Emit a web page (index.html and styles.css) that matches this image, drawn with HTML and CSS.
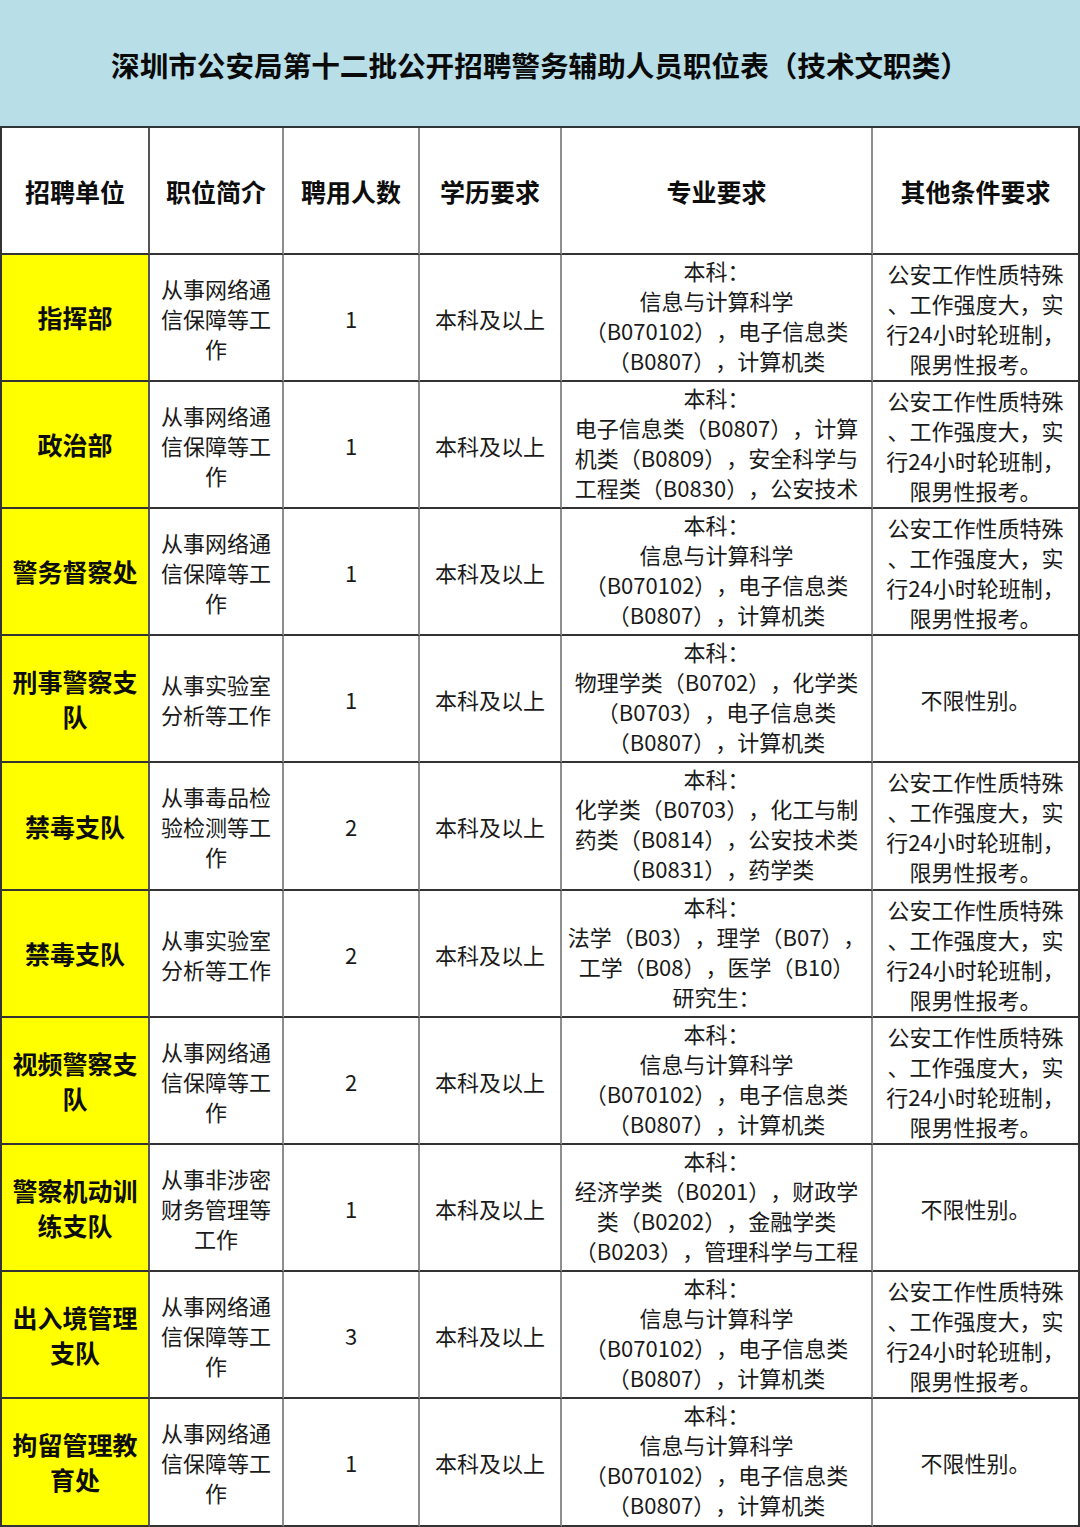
FILE: index.html
```html
<!DOCTYPE html>
<html lang="zh-CN">
<head>
<meta charset="utf-8">
<title>深圳市公安局第十二批公开招聘警务辅助人员职位表（技术文职类）</title>
<link rel="stylesheet" href="styles.css">
</head>
<body>
<div class="page">
  <header class="banner">
    <h1 class="title">深圳市公安局第十二批公开招聘警务辅助人员职位表（技术文职类）</h1>
  </header>
  <div class="grid">
    <div class="cell head first">招聘单位</div>
    <div class="cell head">职位简介</div>
    <div class="cell head">聘用人数</div>
    <div class="cell head">学历要求</div>
    <div class="cell head">专业要求</div>
    <div class="cell head last">其他条件要求</div>

    <div class="cell unit first">指挥部</div>
    <div class="cell txt narrow">从事网络通信保障等工作</div>
    <div class="cell txt">1</div>
    <div class="cell txt">本科及以上</div>
    <div class="cell major">本科：<br>信息与计算科学（B070102），电子信息类（B0807），计算机类（B0809），公安技术类（B0831）</div>
    <div class="cell txt last">公安工作性质特殊<br>、工作强度大，实<br>行24小时轮班制，<br>限男性报考。</div>

    <div class="cell unit first">政治部</div>
    <div class="cell txt narrow">从事网络通信保障等工作</div>
    <div class="cell txt">1</div>
    <div class="cell txt">本科及以上</div>
    <div class="cell major">本科：<br>电子信息类（B0807），计算机类（B0809），安全科学与工程类（B0830），公安技术类（B0831）</div>
    <div class="cell txt last">公安工作性质特殊<br>、工作强度大，实<br>行24小时轮班制，<br>限男性报考。</div>

    <div class="cell unit first">警务督察处</div>
    <div class="cell txt narrow">从事网络通信保障等工作</div>
    <div class="cell txt">1</div>
    <div class="cell txt">本科及以上</div>
    <div class="cell major">本科：<br>信息与计算科学（B070102），电子信息类（B0807），计算机类（B0809），公安技术类（B0831）</div>
    <div class="cell txt last">公安工作性质特殊<br>、工作强度大，实<br>行24小时轮班制，<br>限男性报考。</div>

    <div class="cell unit first">刑事警察支队</div>
    <div class="cell txt narrow">从事实验室分析等工作</div>
    <div class="cell txt">1</div>
    <div class="cell txt">本科及以上</div>
    <div class="cell major">本科：<br>物理学类（B0702），化学类（B0703），电子信息类（B0807），计算机类（B0809），公安技术类（B0831）</div>
    <div class="cell txt last">不限性别。</div>

    <div class="cell unit first">禁毒支队</div>
    <div class="cell txt narrow">从事毒品检验检测等工作</div>
    <div class="cell txt">2</div>
    <div class="cell txt">本科及以上</div>
    <div class="cell major">本科：<br>化学类（B0703），化工与制药类（B0814），公安技术类（B0831），药学类（B1007），中药学类（B1008）</div>
    <div class="cell txt last">公安工作性质特殊<br>、工作强度大，实<br>行24小时轮班制，<br>限男性报考。</div>

    <div class="cell unit first">禁毒支队</div>
    <div class="cell txt narrow">从事实验室分析等工作</div>
    <div class="cell txt">2</div>
    <div class="cell txt">本科及以上</div>
    <div class="cell major">本科：<br>法学（B03），理学（B07），工学（B08），医学（B10）<br>研究生：<br>法学（A03），理学（A07），工学（A08），医学（A10）</div>
    <div class="cell txt last">公安工作性质特殊<br>、工作强度大，实<br>行24小时轮班制，<br>限男性报考。</div>

    <div class="cell unit first">视频警察支队</div>
    <div class="cell txt narrow">从事网络通信保障等工作</div>
    <div class="cell txt">2</div>
    <div class="cell txt">本科及以上</div>
    <div class="cell major">本科：<br>信息与计算科学（B070102），电子信息类（B0807），计算机类（B0809），公安技术类（B0831）</div>
    <div class="cell txt last">公安工作性质特殊<br>、工作强度大，实<br>行24小时轮班制，<br>限男性报考。</div>

    <div class="cell unit first">警察机动训练支队</div>
    <div class="cell txt narrow">从事非涉密财务管理等工作</div>
    <div class="cell txt">1</div>
    <div class="cell txt">本科及以上</div>
    <div class="cell major">本科：<br>经济学类（B0201），财政学类（B0202），金融学类（B0203），管理科学与工程（B1201），工商管理类（B1202）</div>
    <div class="cell txt last">不限性别。</div>

    <div class="cell unit first">出入境管理支队</div>
    <div class="cell txt narrow">从事网络通信保障等工作</div>
    <div class="cell txt">3</div>
    <div class="cell txt">本科及以上</div>
    <div class="cell major">本科：<br>信息与计算科学（B070102），电子信息类（B0807），计算机类（B0809），公安技术类（B0831）</div>
    <div class="cell txt last">公安工作性质特殊<br>、工作强度大，实<br>行24小时轮班制，<br>限男性报考。</div>

    <div class="cell unit first">拘留管理教育处</div>
    <div class="cell txt narrow">从事网络通信保障等工作</div>
    <div class="cell txt">1</div>
    <div class="cell txt">本科及以上</div>
    <div class="cell major">本科：<br>信息与计算科学（B070102），电子信息类（B0807），计算机类（B0809），公安技术类（B0831）</div>
    <div class="cell txt last">不限性别。</div>
  </div>
</div>
</body>
</html>
```

FILE: styles.css
```css
html, body {
  margin: 0;
  padding: 0;
  background: #ffffff;
}

body {
  font-family: "Noto Sans CJK SC", "Noto Sans", sans-serif;
  color: #111111;
  text-spacing-trim: space-all;
}

.page {
  width: 1080px;
}

.banner {
  box-sizing: border-box;
  height: 128px;
  background: #b8dee7;
  border-bottom: 2px solid #2f3535;
  display: flex;
  align-items: center;
  justify-content: center;
}

.title {
  margin: 0;
  font-size: 28.6px;
  font-weight: 700;
  line-height: 36px;
  color: #0a0a0a;
  padding-top: 3px;
}

.grid {
  display: grid;
  grid-template-columns: 150px 134px 136px 142px 311px 207px;
  grid-template-rows: 127px 127px 127px 127px 127px 128px 127px 127px 127px 127px 128px;
}

.cell {
  box-sizing: border-box;
  border-right: 2px solid #8e8e8e;
  border-bottom: 2px solid #333333;
  display: flex;
  align-items: center;
  justify-content: center;
  text-align: center;
  font-size: 22px;
  line-height: 30px;
  color: #1a1a1a;
}

.cell.first {
  border-left: 2px solid #333333;
  border-right-color: #555555;
}

.cell.last {
  border-right: 2px solid #333333;
}

.head {
  font-size: 25px;
  font-weight: 700;
  line-height: 34px;
  color: #0d0d0d;
}

.unit {
  background: #ffff00;
  font-size: 25px;
  font-weight: 700;
  line-height: 35px;
  color: #0d0d0d;
  padding: 0 2px;
}

.txt {
  padding: 0 6px;
}

.narrow {
  padding: 0 8px;
}

.major {
  display: block;
  overflow: hidden;
  padding: 0 4px;
}
```
